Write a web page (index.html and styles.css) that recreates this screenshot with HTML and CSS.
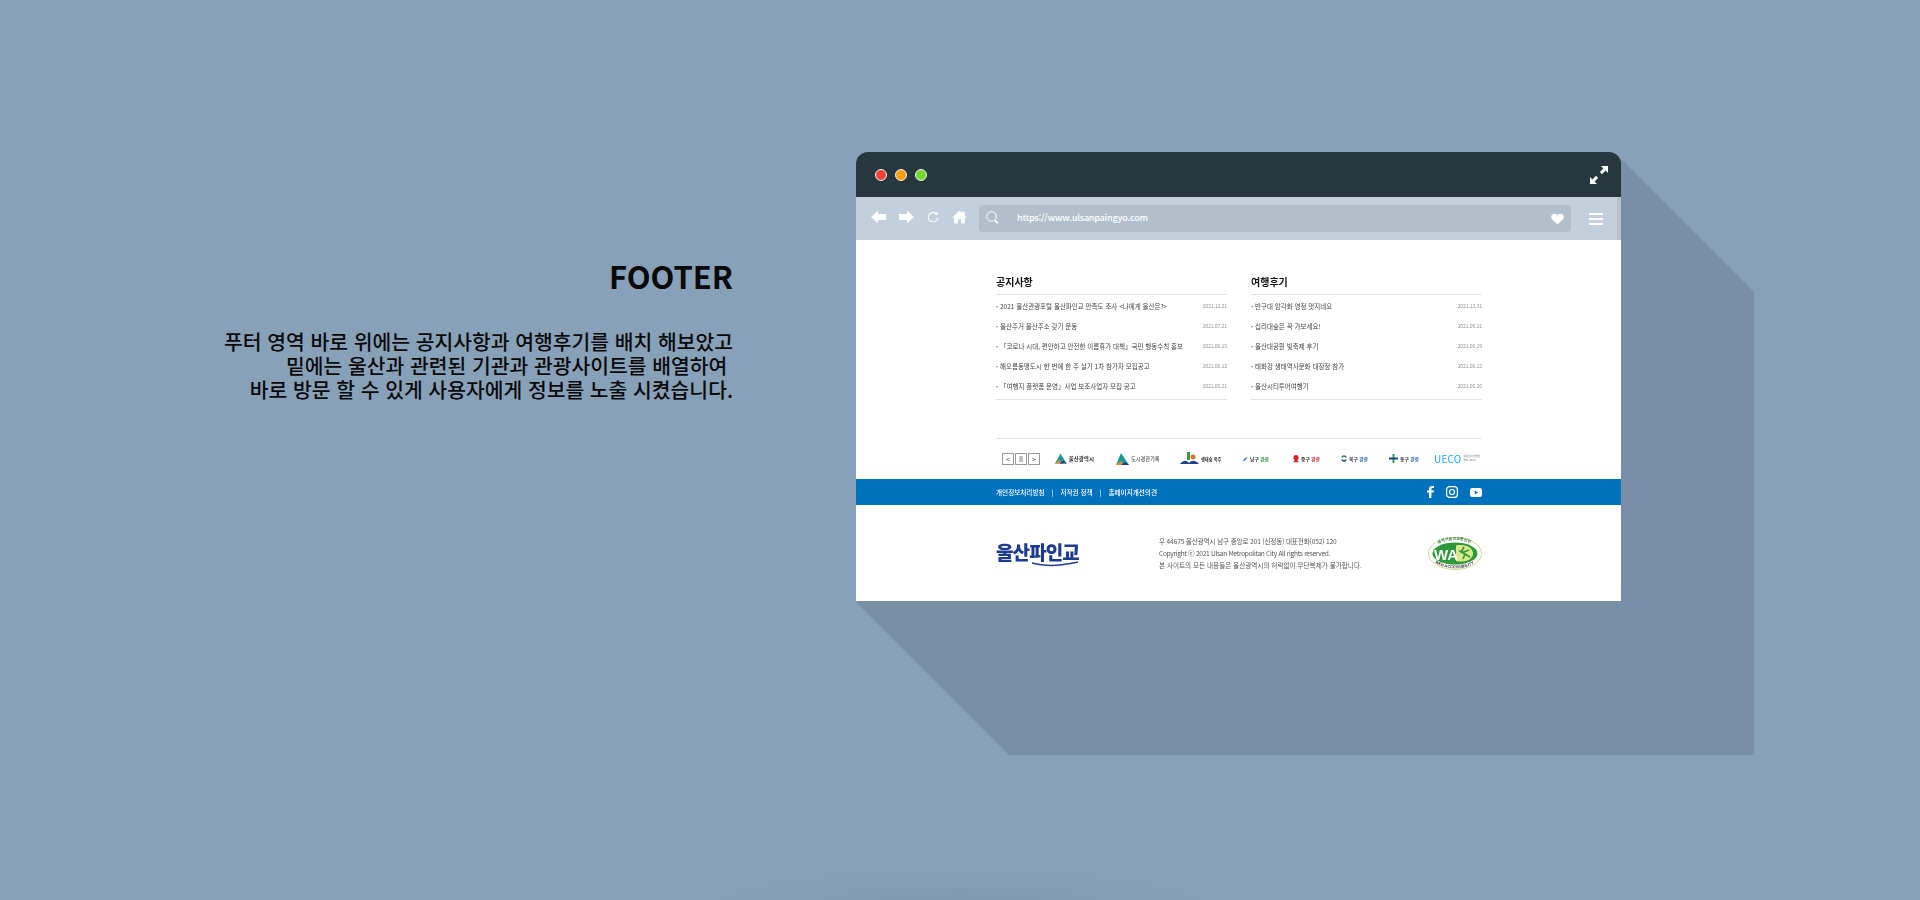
FILE: index.html
```html
<!DOCTYPE html>
<html lang="ko">
<head>
    <meta charset="UTF-8">
    <title>FOOTER</title>
    <link rel="stylesheet" href="styles.css">
</head>
<body>
    <svg class="shadow" width="1920" height="900" viewBox="0 0 1920 900">
        <polygon points="1621,159 1754,292 1754,755 1009,755 856,602"></polygon>
    </svg>

    <div class="stage">
        <div class="copy">
            <h1>FOOTER</h1>
            <p>푸터 영역 바로 위에는 공지사항과 여행후기를 배치 해보았고<br>밑에는 울산과 관련된 기관과 관광사이트를 배열하여&nbsp;<br>바로 방문 할 수 있게 사용자에게 정보를 노출 시켰습니다.</p>
        </div>

        <div class="window">
            <div class="titlebar">
                <div class="dots">
                    <span class="dot red"></span>
                    <span class="dot orange"></span>
                    <span class="dot green"></span>
                </div>
                <svg width="18" height="18" viewBox="0 0 18 18" fill="#fff">
                    <path d="M11 0h7v7l-2.400-2.400-3.600 3.600-2.200-2.200 3.600-3.600z"></path>
                    <path d="M7 18H0v-7l2.400 2.400 3.600-3.600 2.200 2.200-3.600 3.600z"></path>
                </svg>
            </div>

            <div class="toolbar">
                <div class="nav">
                    <svg width="15" height="14" viewBox="0 0 15 14" fill="#fff"><path d="M0 7l7-6.500V4h8v6H7v3.500z"></path></svg>
                    <svg width="15" height="14" viewBox="0 0 15 14" fill="#fff"><path d="M15 7L8 .5V4H0v6h8v3.500z"></path></svg>
                    <svg width="12" height="14" viewBox="0 0 13 14" fill="none" stroke="#fff" stroke-width="1.200"><path d="M10.800 4A5.200 5.200 0 1 0 11.800 8"></path><path d="M11.800 1v3.600H8.200" fill="#fff" stroke="none"></path></svg>
                    <svg width="15" height="14" viewBox="0 0 15 14" fill="#fff"><path d="M7.500 .5L0 7.500h2.200V13.500h3.800V9.500h3V13.500h3.800V7.500H15L12.500 5V1.500h-2V3.200z"></path></svg>
                </div>
                <div class="urlbar">
                    <svg class="search" width="13" height="14" viewBox="0 0 13 14" fill="none" stroke="#fff" stroke-width="1"><circle cx="5.500" cy="5.500" r="4.800"></circle><path d="M9 9.500l3 3" stroke-width="1.600"></path></svg>
                    <span class="url">https://www.ulsanpaingyo.com</span>
                    <svg class="heart" width="13" height="12" viewBox="0 0 13 12" fill="#fff"><path d="M6.500 11.500L1 6.200C-.6 4.300 .2 1 3.200 .8 4.800 .7 5.900 1.500 6.500 2.600 7.100 1.500 8.200 .7 9.800 .8c3 .2 3.800 3.500 2.200 5.400z"></path></svg>
                </div>
                <div class="burger"><span></span><span></span><span></span></div>
            </div>

            <div class="page">
                <div class="boards">
                    <section class="board">
                        <h2>공지사항</h2>
                        <ul>
                            <li><span>2021 울산관광포털 울산파인교 만족도 조사 &lt;나에게 울산은?&gt;</span><em>2021.12.21</em></li>
                            <li><span>울산주거 울산주소 갖기 운동</span><em>2021.07.21</em></li>
                            <li><span>「코로나 시대, 편안하고 안전한 이름휴가 대책」국민 행동수칙 홍보</span><em>2021.06.15</em></li>
                            <li><span>해오름동맹도시 한 번에 한 주 살기 1차 참가자 모집공고</span><em>2021.06.12</em></li>
                            <li><span>「여행지 플랫폼 운영」사업 보조사업자 모집 공고</span><em>2021.05.21</em></li>
                        </ul>
                    </section>
                    <section class="board">
                        <h2>여행후기</h2>
                        <ul>
                            <li><span>반구대 암각화 영정 멋지네요</span><em>2021.12.31</em></li>
                            <li><span>십리대숲은 꼭 가보세요!</span><em>2021.09.21</em></li>
                            <li><span>울산대공원 빛축제 후기</span><em>2021.06.19</em></li>
                            <li><span>태화강 생태역사문화 대장정 참가</span><em>2021.06.12</em></li>
                            <li><span>울산시티투어여행기</span><em>2021.05.26</em></li>
                        </ul>
                    </section>
                </div>

                <div class="partners">
                    <div class="pager"><span>&lt;</span><span>II</span><span>&gt;</span></div>
                    <div class="logo w39">
                        <svg width="13" height="11" viewBox="0 0 13 11"><path d="M6 0l7 11H0z" fill="#1c9a94"></path><path d="M0 11l5-4 3 4z" fill="#e8892f"></path><path d="M5 11l4-3 4 3z" fill="#1f3f8f"></path></svg>
                        <b>울산광역시</b>
                    </div>
                    <div class="logo w44">
                        <svg width="13" height="12" viewBox="0 0 13 12"><path d="M5 0l8 12H0z" fill="#1c9a94"></path><path d="M0 12l5-4 3 4z" fill="#e8892f"></path><path d="M5 12l4-3 4 3z" fill="#1f3f8f"></path></svg>
                        <b class="thin">도시경관기록</b>
                    </div>
                    <div class="logo w42">
                        <svg width="19" height="13" viewBox="0 0 19 13"><path d="M7 0h3v8H7z" fill="#3c9a3f"></path><circle cx="13" cy="5" r="2.500" fill="#e0702a"></circle><path d="M0 12c4-4 6-4 9-1 3-3 6-3 10 1z" fill="#1f3f8f"></path></svg>
                        <b class="small">생태숲 옥주</b>
                    </div>
                    <div class="logo w26">
                        <svg width="10" height="8" viewBox="0 0 10 8"><path d="M0 8C2 3 5 1 10 0 7 3 5 5 3 8z" fill="#2f6fc0"></path></svg>
                        <b class="tiny">남구 <i class="g">관광</i></b>
                    </div>
                    <div class="logo w27">
                        <svg width="7" height="9" viewBox="0 0 7 9"><circle cx="3.500" cy="3.500" r="3" fill="#d3232a"></circle><path d="M0 9h7L3.500 5z" fill="#d3232a"></path></svg>
                        <b class="tiny">중구 <i class="r">관광</i></b>
                    </div>
                    <div class="logo w27">
                        <svg width="8" height="9" viewBox="0 0 8 9" fill="none" stroke-width="2"><path d="M1 3a3.500 3.500 0 0 1 6 0" stroke="#1e8a4a"></path><path d="M7 6a3.500 3.500 0 0 1-6 0" stroke="#1f3f8f"></path></svg>
                        <b class="tiny">북구 <i class="b">관광</i></b>
                    </div>
                    <div class="logo w30">
                        <svg width="9" height="9" viewBox="0 0 9 9"><path d="M3.500 0h2v9h-2z" fill="#3c9a3f"></path><path d="M0 3.500h9v2H0z" fill="#1f3f8f"></path></svg>
                        <b class="tiny">동구 <i class="b">관광</i></b>
                    </div>
                    <div class="logo w45">
                        <b class="ueco">UECO</b>
                        <b class="micro">울산전시컨벤션<br>센터 UECO</b>
                    </div>
                </div>

                <div class="linkbar">
                    <div class="links">
                        <a>개인정보처리방침</a><i>|</i><a>저작권 정책</a><i>|</i><a>홈페이지개선의견</a>
                    </div>
                    <div class="social">
                        <svg width="7" height="12" viewBox="0 0 7 12" fill="#fff"><path d="M2 12V6.500H0v-2h2V3c0-2 1-3 3-3h2v2H5.500C4.700 2 4.400 2.300 4.400 3v1.500H7l-.4 2H4.400V12z"></path></svg>
                        <svg width="12" height="12" viewBox="0 0 12 12" fill="none" stroke="#fff" stroke-width="1.200"><rect x=".6" y=".6" width="10.800" height="10.800" rx="3"></rect><circle cx="6" cy="6" r="2.500"></circle></svg>
                        <svg width="12" height="9" viewBox="0 0 12 9"><rect width="12" height="9" rx="2.200" fill="#fff"></rect><path d="M4.800 2.500v4L8 4.500z" fill="#0071bd"></path></svg>
                    </div>
                </div>

                <div class="site-footer">
                    <div class="brand">
                        <span>울산파인교</span>
                        <svg class="wave" width="82" height="6" viewBox="0 0 82 6" fill="none" stroke="#1d3b8f" stroke-width="1.400"><path d="M36 2c10 3 24 4 46-1"></path></svg>
                    </div>
                    <div class="address">
                        <p>우 44675 울산광역시 남구 중앙로 201 (신정동) 대표전화(052) 120</p>
                        <p>Copyright ⓒ 2021 Ulsan Metropolitan City All rights reserved.</p>
                        <p>본 사이트의 모든 내용들은 울산광역시의 허락없이 무단복제가 불가합니다.</p>
                    </div>
                    <svg class="wa" width="54" height="33" viewBox="0 0 54 33">
                        <ellipse cx="27" cy="16.500" rx="26.500" ry="16" fill="#fff" stroke="#c9dd8e"></ellipse>
                        <ellipse cx="27" cy="16.500" rx="22.500" ry="11" fill="#2c9a3a"></ellipse>
                        <path d="M28 8.500c10-2 17 2.500 17 8s-7 9.500-17 7.500z" fill="#d9e98a"></path>
                        <text x="6" y="22.500" class="wa-big">WA</text>
                        <path d="M36 10l-3 5 4 2-2 5M31 14l5 1 5-2M37 17l5 3" fill="none" stroke="#2c9a3a" stroke-width="1.600"></path>
                        <path id="waTop" d="M6 11C14 0 40 0 48 11" fill="none"></path>
                        <path id="waBot" d="M4 23C14 34 40 34 50 23" fill="none"></path>
                        <text class="wa-top"><textPath href="#waTop" startOffset="6">과학기술정보통신부</textPath></text>
                        <text class="wa-bot"><textPath href="#waBot" startOffset="4">WEB ACCESSIBILITY</textPath></text>
                    </svg>
                </div>
            </div>
        </div>
    </div>
</body>
</html>
```

FILE: styles.css
```css
html, body {
    margin: 0;
    height: 900px;
    overflow: hidden;
}
body {
    position: relative;
    font-family: "Noto Sans CJK KR", "Noto Sans", sans-serif;
    background: radial-gradient(ellipse 270px 42px at 960px 908px, #7e97b0, rgba(135, 161, 185, 0)), #87a1b9;
}
.shadow {
    position: absolute;
    left: 0;
    top: 0;
}
.shadow polygon { fill: #7890a7; }

.stage {
    position: relative;
    display: flex;
    align-items: flex-start;
}

/* left text */
.copy {
    width: 733px;
    padding-top: 254px;
    text-align: right;
    color: #0a0a0a;
}
.copy h1 {
    margin: 0;
    font-size: 31px;
    line-height: 44px;
    font-weight: 700;
}
.copy p {
    margin: 31px 0 0;
    font-size: 20.400px;
    line-height: 24px;
    font-weight: 500;
}

/* browser window */
.window {
    width: 765px;
    margin: 152px 0 0 123px;
}
.titlebar {
    height: 45px;
    padding: 0 13px 0 19px;
    display: flex;
    align-items: center;
    justify-content: space-between;
    background: #26383d;
    border-radius: 12px 12px 0 0;
}
.dots {
    display: flex;
    gap: 8px;
    margin-top: 1px;
}
.dot {
    width: 10px;
    height: 10px;
    border: 1px solid #eee;
    border-radius: 50%;
}
.red { background: #f44336; }
.orange { background: #ff9f0f; }
.green { background: #74d92a; }

.toolbar {
    height: 43px;
    display: flex;
    align-items: center;
    padding-left: 15px;
    background: #c3cfdb;
    border-right: 4px solid #b6c3cf;
}
.nav {
    width: 108px;
    margin-top: -3px;
    display: flex;
    align-items: center;
    gap: 13px;
}
.urlbar {
    width: 592px;
    height: 27px;
    display: flex;
    align-items: center;
    padding: 0 7px;
    box-sizing: border-box;
    background: #b2bfcb;
    border-radius: 4px;
}
.search { margin-top: -2px; }
.url {
    flex: 1;
    margin: -3px 0 0 18px;
    font-size: 9px;
    letter-spacing: -.2px;
    font-weight: 500;
    color: #fff;
}
.burger {
    width: 14px;
    margin-left: 18px;
    display: flex;
    flex-direction: column;
    gap: 3px;
}
.burger span {
    height: 2px;
    background: #fff;
}

/* page shot */
.page { background: #fff; }
.boards, .partners, .links, .brand, .address, .wa {
    filter: blur(.3px);
}
.boards {
    display: grid;
    grid-template-columns: 231px 231px;
    gap: 24px;
    padding: 33px 139px 0 140px;
}
.board h2 {
    margin: 0;
    height: 21px;
    line-height: 18px;
    font-size: 10px;
    font-weight: 700;
    color: #111;
    border-bottom: 1.500px solid #e2e2e2;
}
.board ul {
    list-style: none;
    margin: 0;
    padding: 1.500px 0 4px;
    border-bottom: 1.500px solid #e2e2e2;
}
.board li {
    height: 19.800px;
    display: flex;
    align-items: center;
    justify-content: space-between;
    font-size: 6.500px;
    color: #444;
}
.board li span::before { content: "· "; font-weight: 700; }
.board em {
    font-style: normal;
    font-size: 5.300px;
    letter-spacing: -.2px;
    color: #999;
}

.partners {
    height: 41px;
    margin: 38px 139px 0 140px;
    padding: 0 0 1px 6px;
    display: flex;
    align-items: center;
    border-top: 1.500px solid #e2e2e2;
    box-sizing: border-box;
}
.pager {
    display: flex;
    gap: 1px;
    margin-right: 15px;
}
.pager span {
    width: 10px;
    height: 10px;
    border: 1px solid #999;
    font-size: 7px;
    line-height: 10px;
    text-align: center;
    color: #444;
}
.logo {
    display: flex;
    align-items: center;
    gap: 2px;
    flex: none;
}
.logo b {
    font-size: 5.500px;
    font-weight: 700;
    color: #333;
    white-space: nowrap;
}
.logo b.thin { font-size: 5.200px; font-weight: 500; color: #555; }
.logo b.small { font-size: 4.200px; }
.logo b.tiny { font-size: 4.800px; }
.logo i { font-style: normal; }
.logo i.g { color: #3f9a45; }
.logo i.r { color: #c33; }
.logo i.b { color: #3a6db0; }
.logo b.ueco { font-size: 10px; font-weight: 400; letter-spacing: .2px; color: #1ea7e6; }
.logo b.micro { font-size: 2.600px; line-height: 3.500px; font-weight: 500; color: #888; }
.w39 { width: 39px; margin-right: 22px; }
.w44 { width: 44px; margin-right: 20px; }
.w42 { width: 42px; margin-right: 21px; }
.w26 { width: 26px; margin-right: 24px; }
.w27 { width: 27px; margin-right: 21px; }
.w30 { width: 30px; margin-right: 15px; }
.w45 { width: 45px; }

.linkbar {
    height: 26px;
    padding: 0 140px;
    display: flex;
    align-items: center;
    justify-content: space-between;
    background: #0071bd;
}
.links {
    display: flex;
    font-size: 6.600px;
    font-weight: 500;
    color: #fff;
}
.links i {
    font-style: normal;
    margin: 0 7px;
}
.social {
    display: flex;
    align-items: center;
    gap: 12px;
    margin-right: -1px;
}

.site-footer {
    height: 96px;
    padding: 0 139px 0 140px;
    display: flex;
    align-items: center;
    background: #fff;
}
.brand {
    position: relative;
    width: 163px;
    margin-top: -1px;
}
.brand span {
    font-size: 19px;
    line-height: 22px;
    font-weight: 900;
    letter-spacing: -.9px;
    color: #1d3b8f;
}
.wave {
    position: absolute;
    left: 0;
    bottom: -2px;
}
.address {
    flex: 1;
    margin-top: -1px;
    font-size: 6.600px;
    color: #555;
}
.address p {
    margin: 0;
    line-height: 12px;
}
.address p:nth-child(1) { letter-spacing: -.15px; }
.address p:nth-child(2) { letter-spacing: -.3px; }
.wa-big {
    font-family: "Liberation Sans", sans-serif;
    font-size: 15px;
    font-weight: 700;
    fill: #fff;
}
.wa-top {
    font-size: 4px;
    font-weight: 700;
    fill: #2c7a35;
}
.wa-bot {
    font-family: "Liberation Sans", sans-serif;
    font-size: 4px;
    font-weight: 700;
    fill: #333;
}
```
